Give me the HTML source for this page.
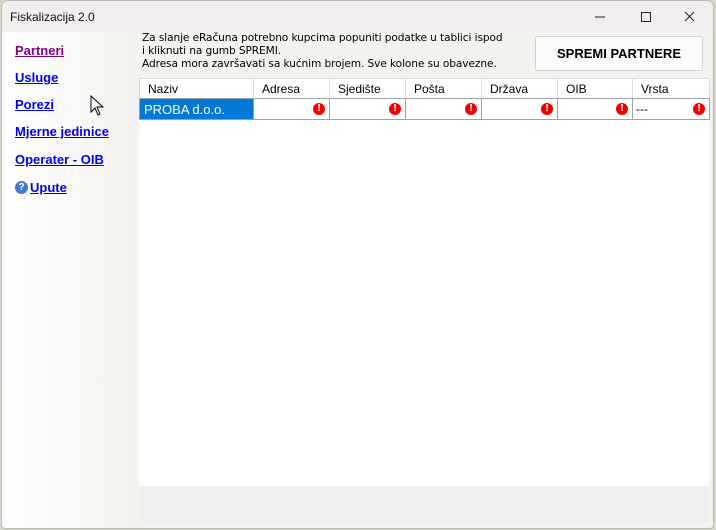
<!DOCTYPE html>
<html><head><meta charset="utf-8"><style>
*{margin:0;padding:0;box-sizing:border-box}
body{width:716px;height:530px;overflow:hidden;background:#d8d8c8;font-family:"Liberation Sans","DejaVu Sans",sans-serif;position:relative}
.win{position:absolute;left:1px;top:0;width:713px;height:529px;background:linear-gradient(90deg,#fff 0px,#f6f5f2 100px,#f3f2ee 140px);border:1px solid #b9b9b9;border-radius:7px 7px 4px 4px;overflow:hidden}
.title{position:absolute;left:0;top:0;width:100%;height:31px;background:#f4eded;font-size:12px;color:#111}
.title span{position:absolute;left:8px;top:9px}
.side a{position:absolute;left:13px;font-size:13px;font-weight:bold;color:#0000ee;text-decoration:underline}
.msg{position:absolute;left:140px;top:31px;font-size:10.6px;line-height:13px;color:#000;font-family:"DejaVu Sans",sans-serif;letter-spacing:-0.1px}
.btn{position:absolute;left:533px;top:35px;width:168px;height:35px;background:#fbfbfb;border:1px solid #d0d0d0;border-radius:3px;font-weight:bold;font-size:13px;text-align:center;line-height:33px;color:#000}
.grid{position:absolute;left:137px;top:77px;width:570px;height:408px;background:#fff}
.bot{position:absolute;left:137px;top:485px;width:570px;height:36px;background:#efefef}
table{position:absolute;left:137px;top:77px;border-collapse:collapse;font-size:12px;table-layout:fixed;width:570px}
td{border:1px solid #a0a0a0;height:21px;padding:0 0 0 7px;position:relative;overflow:hidden;white-space:nowrap}
tr.h td{border-color:#ddd #ddd #a0a0a0 #ddd;height:20px;padding-left:8px}
.e{position:absolute;right:4px;top:4px;width:12px;height:12px;border-radius:50%;background:#e00;color:#fff;font-size:10px;font-weight:bold;line-height:12px;text-align:center}
</style></head><body>
<div class="win">
<div class="title"><span>Fiskalizacija 2.0</span>
<svg style="position:absolute;left:589px;top:8px" width="110" height="16"><line x1="4" y1="8" x2="14" y2="8" stroke="#222"/><rect x="50.5" y="3.5" width="9" height="9" fill="none" stroke="#222"/><path d="M94 3l9 9M103 3l-9 9" stroke="#222"/></svg></div>
<div class="side">
<a style="top:42px;color:#800080">Partneri</a>
<a style="top:69px">Usluge</a>
<a style="top:96px">Porezi</a>
<a style="top:123px">Mjerne jedinice</a>
<a style="top:151px">Operater - OIB</a>
<span style="position:absolute;left:13px;top:180px;width:13px;height:13px;border-radius:50%;background:#4a78c8;color:#fff;font-size:10px;font-weight:bold;text-align:center;line-height:13px">?</span>
<a style="top:179px;left:28px">Upute</a>
</div>
<svg style="position:absolute;left:88px;top:94px" width="14" height="22"><path d="M1 1v16l4-4 3 7 2-1-3-7h6z" fill="#fff" stroke="#000"/></svg>
<div class="msg">Za slanje eRačuna potrebno kupcima popuniti podatke u tablici ispod<br>i kliknuti na gumb SPREMI.<br>Adresa mora završavati sa kućnim brojem. Sve kolone su obavezne.</div>
<div class="btn">SPREMI PARTNERE</div>
<div class="grid"></div><div class="bot"></div>
<table>
<colgroup><col style="width:114px"><col style="width:76px"><col style="width:76px"><col style="width:76px"><col style="width:76px"><col style="width:75px"><col style="width:77px"></colgroup>
<tr class="h"><td>Naziv</td><td>Adresa</td><td>Sjedište</td><td>Pošta</td><td>Država</td><td>OIB</td><td>Vrsta</td></tr>
<tr><td style="background:#0078d7;color:#fff;font-size:13px;padding-left:4px">PROBA d.o.o.</td><td><span class="e">!</span></td><td><span class="e">!</span></td><td><span class="e">!</span></td><td><span class="e">!</span></td><td><span class="e">!</span></td><td style="padding-left:3px">---<span class="e">!</span></td></tr>
</table>
</div>
</body></html>
